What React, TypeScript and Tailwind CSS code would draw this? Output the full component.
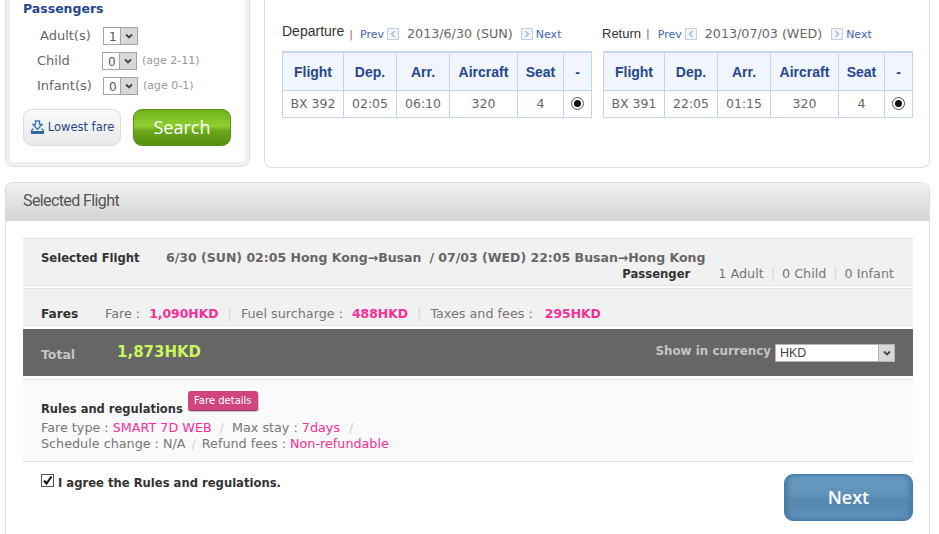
const dv = "font-['DejaVu_Sans',sans-serif]";

function Caret() {
  return (
    <svg width="8" height="6" viewBox="0 0 8 6" className="block">
      <path d="M1 1.5 L4 4.5 L7 1.5" fill="none" stroke="#444" strokeWidth="1.8" />
    </svg>
  );
}

function FakeSelect({ value }: { value: string }) {
  return (
    <div className="flex h-[18px] w-[35px] border border-[#a5a5a5] bg-white">
      <span className="flex-1 pl-[5px] pt-[2px] text-[12px] leading-[15px] text-[#555]">{value}</span>
      <span className="flex w-[17px] items-center justify-center border-l border-[#a5a5a5] bg-[#d8d8d8]">
        <Caret />
      </span>
    </div>
  );
}

function Radio() {
  return (
    <span className="mx-auto flex h-[13px] w-[13px] items-center justify-center rounded-full border border-[#555] bg-white">
      <span className="h-[7px] w-[7px] rounded-full bg-[#111]" />
    </span>
  );
}

function Arrow({ dir }: { dir: "l" | "r" }) {
  return (
    <span className="inline-flex h-[12px] w-[12px] items-center justify-center border border-[#c3cfe0] bg-[#f1f5fa]">
      <svg width="6" height="8" viewBox="0 0 6 8">
        <path d={dir === "l" ? "M4.5 1 L1.5 4 L4.5 7" : "M1.5 1 L4.5 4 L1.5 7"} fill="none" stroke="#6c88b4" strokeWidth="1" />
      </svg>
    </span>
  );
}

function FlightTable({ no, dep, arr }: { no: string; dep: string; arr: string }) {
  const widths = ["w-[61px]", "w-[53px]", "w-[53px]", "w-[68px]", "w-[46px]", "w-[28px]"];
  const head = ["Flight", "Dep.", "Arr.", "Aircraft", "Seat", "-"];
  const body = [no, dep, arr, "320", "4"];
  return (
    <table className="w-[309px] table-fixed border-collapse border-t-2 border-[#c5d3ee]">
      <colgroup>
        {widths.map((w, i) => (
          <col key={i} className={w} />
        ))}
      </colgroup>
      <thead>
        <tr className="h-[38px] bg-[#f0f5fe]">
          {head.map((h) => (
            <th
              key={h}
              className="border border-t-0 border-[#c5d3ee] p-0 pt-[2px] text-center font-['Liberation_Sans',sans-serif] text-[14px] font-bold text-[#27478c]"
            >
              {h}
            </th>
          ))}
        </tr>
      </thead>
      <tbody>
        <tr className="h-[27px]">
          {body.map((b, i) => (
            <td key={i} className="border border-[#c5d3ee] p-0 pt-[2px] text-center text-[12.5px] text-[#666]">
              {b}
            </td>
          ))}
          <td className="border border-[#c5d3ee] p-0">
            <Radio />
          </td>
        </tr>
      </tbody>
    </table>
  );
}

function Sep({ className }: { className?: string }) {
  return <span className={`text-[#cfd6da] ${className ?? ""}`}>|</span>;
}

export default function App() {
  return (
    <div className={`h-[534px] w-[939px] overflow-hidden bg-white ${dv}`}>
      <div className="flex h-[168px] pl-[5px]">
        {/* search box */}
        <div className="h-[167px] w-[245px] rounded-b-lg border-x border-b border-[#dfdfdf]">
          <div className="h-full rounded-b-lg border-x-4 border-b-4 border-[#f0f0f0] bg-white pl-[13px]">
            <div className="pt-[1px] text-[12.5px] font-bold leading-[15px] text-[#27478c]">Passengers</div>
            <div className="mt-[11px] flex h-[18px] items-center">
              <span className="w-[80px] pl-[17px] text-[13px] text-[#666]">Adult(s)</span>
              <FakeSelect value="1" />
            </div>
            <div className="mt-[7px] flex h-[18px] items-center">
              <span className="w-[79px] pl-[14px] text-[13px] text-[#666]">Child</span>
              <FakeSelect value="0" />
              <span className="ml-[5px] text-[11px] text-[#999]">(age 2-11)</span>
            </div>
            <div className="mt-[7px] flex h-[18px] items-center">
              <span className="w-[80px] pl-[14px] text-[13px] text-[#666]">Infant(s)</span>
              <FakeSelect value="0" />
              <span className="ml-[5px] text-[11px] text-[#999]">(age 0-1)</span>
            </div>
            <div className="mt-[14px] flex gap-[12px]">
              <button className="flex h-[37px] w-[98px] items-center justify-center gap-[3px] rounded-[9px] border border-[#dcdcdc] bg-gradient-to-b from-[#fbfbfb] to-[#e9e9e9] text-[11.5px] text-[#27478c]">
                <svg width="15" height="15" viewBox="0 0 15 15" className="shrink-0">
                  <path d="M5.5 1 L9.5 1 L9.5 4.5 L12 4.5 L7.5 9.5 L3 4.5 L5.5 4.5 Z" fill="none" stroke="#3b78b8" strokeWidth="1.4" />
                  <path d="M1 11 L3.5 8.5 M14 11 L11.5 8.5" fill="none" stroke="#3b78b8" strokeWidth="1.4" />
                  <path d="M1 11 L14 11 L14 14 L1 14 Z" fill="#2f68a8" />
                </svg>
                Lowest fare
              </button>
              <button className="h-[37px] w-[98px] rounded-[9px] border border-[#5c8f17] bg-[linear-gradient(#6fb01c,#8fd12e_45%,#6aa81a_60%,#558f12)] font-['Open_Sans',sans-serif] text-[18px] font-medium text-white">
                Search
              </button>
            </div>
          </div>
        </div>

        {/* flight picker */}
        <div className="ml-[14px] h-[168px] w-[666px] rounded-b-lg border-x border-b border-[#dcdcdc] pt-[24px]">
          <div className="flex pl-[17px]">
            <div className="w-[321px]">
              <div className="flex h-[27px] items-start whitespace-nowrap">
                <span className="font-['Liberation_Sans',sans-serif] text-[14px] font-medium leading-[15px] text-[#333]">Departure</span>
                <span className="ml-[5px] mt-[3px] text-[11px] leading-[15px] text-[#a06a6a]">|</span>
                <span className="ml-[7px] mt-[3px] text-[11px] leading-[15px] text-[#3f63b4]">Prev</span>
                <span className="ml-[3px] mt-[4px] flex"><Arrow dir="l" /></span>
                <span className="ml-[8px] mt-[2px] text-[12.7px] leading-[15px] text-[#666]">2013/6/30 (SUN)</span>
                <span className="ml-[8px] mt-[4px] flex"><Arrow dir="r" /></span>
                <span className="ml-[3px] mt-[3px] text-[11px] leading-[15px] text-[#3f63b4]">Next</span>
              </div>
              <FlightTable no="BX 392" dep="02:05" arr="06:10" />
            </div>
            <div>
              <div className="-ml-[1px] flex h-[27px] items-start whitespace-nowrap">
                <span className="mt-[2px] font-['Liberation_Sans',sans-serif] text-[13px] font-medium leading-[15px] text-[#333]">Return</span>
                <span className="ml-[5px] mt-[2px] text-[11px] leading-[15px] text-[#666]">|</span>
                <span className="ml-[8px] mt-[3px] text-[11px] leading-[15px] text-[#3f63b4]">Prev</span>
                <span className="ml-[3px] mt-[4px] flex"><Arrow dir="l" /></span>
                <span className="ml-[8px] mt-[2px] text-[12.7px] leading-[15px] text-[#666]">2013/07/03 (WED)</span>
                <span className="ml-[9px] mt-[4px] flex"><Arrow dir="r" /></span>
                <span className="ml-[3px] mt-[3px] text-[11px] leading-[15px] text-[#3f63b4]">Next</span>
              </div>
              <FlightTable no="BX 391" dep="22:05" arr="01:15" />
            </div>
          </div>
        </div>
      </div>

      {/* selected flight panel */}
      <div className="ml-[5px] mt-[14px] h-[400px] w-[925px] rounded-t-lg border-x border-t border-[#dcdcdc]">
        <div className="h-[38px] rounded-t-lg bg-gradient-to-b from-[#f2f2f2] to-[#d4d4d4] pl-[17px] font-['Roboto',sans-serif] text-[16px] leading-[36px] tracking-[-0.6px] text-[#555]">
          Selected Flight
        </div>
        <div className="ml-[17px] mr-[16px] mt-[17px]">
          <div className="h-[48px] border-y border-[#e2e2e2] bg-[#f1f1f1] pl-[18px] pr-[19px] pt-[11px] text-[12.75px] leading-[16px]">
            <div className="flex items-baseline whitespace-nowrap font-bold">
              <span className="w-[125px] text-[11.6px] text-[#333]">Selected Flight</span>
              <span className="text-[12.5px] text-[#666]">6/30 (SUN) 02:05 Hong Kong→Busan</span>
              <span className="ml-[8px] text-[12.5px] text-[#666]">/ 07/03 (WED) 22:05 Busan→Hong Kong</span>
            </div>
            <div className="flex items-baseline justify-end whitespace-nowrap">
              <span className="text-[11.65px] font-bold text-[#333]">Passenger</span>
              <span className="ml-[28px] text-[#777]">1 Adult</span>
              <Sep className="mx-[7px]" />
              <span className="text-[#777]">0 Child</span>
              <Sep className="mx-[7px]" />
              <span className="text-[#777]">0 Infant</span>
            </div>
          </div>
          <div className="mt-[2px] h-[38px] border-y border-[#e2e2e2] bg-[#f1f1f1] pl-[18px] pt-[17px] text-[12.75px] leading-[16px]">
            <div className="flex items-baseline whitespace-nowrap">
              <span className="w-[64px] text-[12.2px] font-bold text-[#333]">Fares</span>
              <span className="text-[#777]">Fare :</span>
              <span className="ml-[9px] text-[12.4px] font-bold text-[#f62f98]">1,090HKD</span>
              <Sep className="mx-[9px]" />
              <span className="text-[#777]">Fuel surcharge :</span>
              <span className="ml-[9px] text-[12.4px] font-bold text-[#f62f98]">488HKD</span>
              <Sep className="mx-[9px]" />
              <span className="text-[#777]">Taxes and fees :</span>
              <span className="ml-[12px] text-[12.4px] font-bold text-[#f62f98]">295HKD</span>
            </div>
          </div>
          <div className="mt-[3px] flex h-[47px] items-center bg-[#666] pl-[18px] pr-[18px]">
            <span className="mt-[5px] w-[76px] text-[12.5px] font-bold text-[#c4c4c4]">Total</span>
            <span className="-mt-[1px] text-[15px] font-bold text-[#c9f55d]">1,873HKD</span>
            <span className="-mt-[1px] ml-auto text-[11.9px] font-bold text-[#c4c4c4]">Show in currency</span>
            <div className="ml-[4px] flex h-[18px] w-[120px] border border-[#b4b4b4] bg-white">
              <span className="flex-1 pl-[4px] font-['Liberation_Sans',sans-serif] text-[12.5px] leading-[17px] text-[#444]">HKD</span>
              <span className="flex w-[16px] items-center justify-center border-l border-[#b4b4b4] bg-[#d8d8d8]">
                <Caret />
              </span>
            </div>
          </div>
          <div className="mt-[3px] h-[83px] border-y border-[#e2e2e2] bg-[#fafafa] pl-[18px] pt-[11px] text-[12.75px] leading-[16px]">
            <div className="flex h-[22px] items-start whitespace-nowrap">
              <span className="mt-[10px] text-[11.5px] font-bold text-[#333]">Rules and regulations</span>
              <span className="ml-[5px] flex h-[20px] w-[70px] items-center justify-center rounded-[3px] border-b border-[#a8365f] bg-[#d1457f] text-[10px] text-white shadow-[1px_1px_0_#ccc]">
                Fare details
              </span>
            </div>
            <div className="mt-[7px] whitespace-nowrap text-[#777]">
              Fare type : <span className="text-[#f62f98]">SMART 7D WEB</span>
              <span className="mx-[8px] text-[#d0d0d0]">/</span>
              Max stay : <span className="text-[#f62f98]">7days</span>
              <span className="ml-[9px] text-[#d0d0d0]">/</span>
            </div>
            <div className="whitespace-nowrap text-[#777]">
              Schedule change : N/A<span className="mx-[6px] text-[#d0d0d0]">/</span>
              Refund fees : <span className="text-[#f62f98]">Non-refundable</span>
            </div>
          </div>
          <div className="flex items-start pl-[18px]">
            <span className="mt-[12px] flex h-[13px] w-[13px] items-center justify-center border border-[#555] bg-white">
              <svg width="11" height="11" viewBox="0 0 11 11">
                <path d="M2 5.5 L4.5 8.5 L9.5 1.5" fill="none" stroke="#111" strokeWidth="2" />
              </svg>
            </span>
            <span className="ml-[4px] mt-[13px] text-[11.6px] font-bold leading-[16px] text-[#333]">I agree the Rules and regulations.</span>
            <button className="ml-auto mt-[12px] h-[47px] w-[129px] rounded-[9px] border border-[#4579a8] bg-[linear-gradient(#6a9bc2,#5f92ba_45%,#5487b0_55%,#6093bb)] font-['Open_Sans',sans-serif] text-[18px] font-semibold text-white shadow-[inset_3px_0_4px_#4a7fa9,inset_-3px_0_4px_#4a7fa9]">
              Next
            </button>
          </div>
        </div>
      </div>
    </div>
  );
}
